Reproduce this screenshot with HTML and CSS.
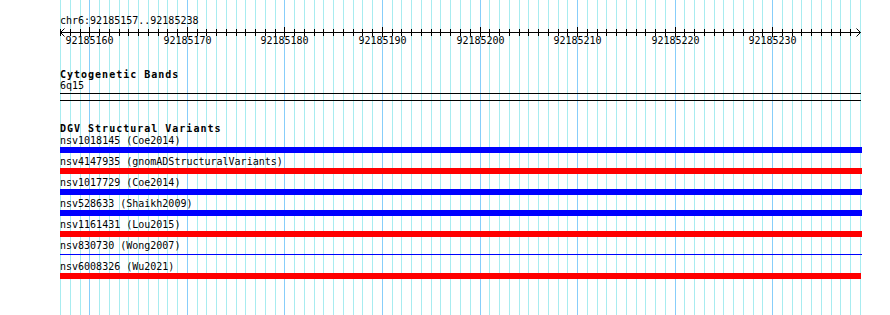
FILE: index.html
```html
<!DOCTYPE html>
<html>
<head>
<meta charset="utf-8">
<link rel="stylesheet" href="styles.css">
</head>
<body>
<div class="panel">
  <svg class="grid" width="890" height="315" viewBox="0 0 890 315">
    <path class="minor" d="M60.5 0V315M70.5 0V315M80.5 0V315M99.5 0V315M109.5 0V315M119.5 0V315M128.5 0V315M138.5 0V315M148.5 0V315M158.5 0V315M167.5 0V315M177.5 0V315M197.5 0V315M206.5 0V315M216.5 0V315M226.5 0V315M236.5 0V315M245.5 0V315M255.5 0V315M265.5 0V315M275.5 0V315M294.5 0V315M304.5 0V315M314.5 0V315M323.5 0V315M333.5 0V315M343.5 0V315M353.5 0V315M362.5 0V315M372.5 0V315M392.5 0V315M401.5 0V315M411.5 0V315M421.5 0V315M431.5 0V315M440.5 0V315M450.5 0V315M460.5 0V315M470.5 0V315M489.5 0V315M499.5 0V315M509.5 0V315M519.5 0V315M528.5 0V315M538.5 0V315M548.5 0V315M558.5 0V315M567.5 0V315M587.5 0V315M597.5 0V315M606.5 0V315M616.5 0V315M626.5 0V315M636.5 0V315M645.5 0V315M655.5 0V315M665.5 0V315M684.5 0V315M694.5 0V315M704.5 0V315M714.5 0V315M723.5 0V315M733.5 0V315M743.5 0V315M753.5 0V315M762.5 0V315M782.5 0V315M792.5 0V315M801.5 0V315M811.5 0V315M821.5 0V315M831.5 0V315M840.5 0V315M850.5 0V315M860.5 0V315"/>
    <path class="major" d="M89.5 0V315M187.5 0V315M284.5 0V315M382.5 0V315M480.5 0V315M577.5 0V315M675.5 0V315M772.5 0V315"/>
  </svg>
  <div class="content">
    <div class="text">chr6:92185157..92185238</div>
    <svg class="ruler" width="802" height="21" viewBox="0 0 802 21">
      <path class="rule" d="M0 6.5H800.5M4.5 2.5L0.5 6.5L4.5 10.5M796.5 2.5L800.5 6.5L796.5 10.5"/>
      <path class="rule" d="M0.5 3v7M10.5 3v7M20.5 3v7M39.5 3v7M49.5 3v7M59.5 3v7M68.5 3v7M78.5 3v7M88.5 3v7M98.5 3v7M107.5 3v7M117.5 3v7M137.5 3v7M146.5 3v7M156.5 3v7M166.5 3v7M176.5 3v7M185.5 3v7M195.5 3v7M205.5 3v7M215.5 3v7M234.5 3v7M244.5 3v7M254.5 3v7M263.5 3v7M273.5 3v7M283.5 3v7M293.5 3v7M302.5 3v7M312.5 3v7M332.5 3v7M341.5 3v7M351.5 3v7M361.5 3v7M371.5 3v7M380.5 3v7M390.5 3v7M400.5 3v7M410.5 3v7M429.5 3v7M439.5 3v7M449.5 3v7M459.5 3v7M468.5 3v7M478.5 3v7M488.5 3v7M498.5 3v7M507.5 3v7M527.5 3v7M537.5 3v7M546.5 3v7M556.5 3v7M566.5 3v7M576.5 3v7M585.5 3v7M595.5 3v7M605.5 3v7M624.5 3v7M634.5 3v7M644.5 3v7M654.5 3v7M663.5 3v7M673.5 3v7M683.5 3v7M693.5 3v7M702.5 3v7M722.5 3v7M732.5 3v7M741.5 3v7M751.5 3v7M761.5 3v7M771.5 3v7M780.5 3v7M790.5 3v7"/>
      <path class="rule" d="M29.5 1v10M127.5 1v10M224.5 1v10M322.5 1v10M420.5 1v10M517.5 1v10M615.5 1v10M712.5 1v10"/>
      <g class="labels">
        <text x="29.5" y="18">92185160</text>
        <text x="127.5" y="18">92185170</text>
        <text x="224.5" y="18">92185180</text>
        <text x="322.5" y="18">92185190</text>
        <text x="420.5" y="18">92185200</text>
        <text x="517.5" y="18">92185210</text>
        <text x="615.5" y="18">92185220</text>
        <text x="712.5" y="18">92185230</text>
      </g>
    </svg>

    <section class="track cyto">
      <div class="title">Cytogenetic Bands</div>
      <div class="text">6q15</div>
      <div class="band"></div>
    </section>

    <section class="track dgv">
      <div class="title">DGV Structural Variants</div>
      <div class="feature">
        <div class="text">nsv1018145 (Coe2014)</div>
        <div class="bar blue"></div>
      </div>
      <div class="feature">
        <div class="text">nsv4147935 (gnomADStructuralVariants)</div>
        <div class="bar red"></div>
      </div>
      <div class="feature">
        <div class="text">nsv1017729 (Coe2014)</div>
        <div class="bar blue"></div>
      </div>
      <div class="feature">
        <div class="text">nsv528633 (Shaikh2009)</div>
        <div class="bar blue"></div>
      </div>
      <div class="feature">
        <div class="text">nsv1161431 (Lou2015)</div>
        <div class="bar red"></div>
      </div>
      <div class="feature">
        <div class="text">nsv830730 (Wong2007)</div>
        <div class="bar thin"><div class="thin-line"></div></div>
      </div>
      <div class="feature">
        <div class="text">nsv6008326 (Wu2021)</div>
        <div class="bar red short"></div>
      </div>
    </section>
  </div>
</div>
</body>
</html>
```

FILE: styles.css
```css
html, body {
  margin: 0;
  padding: 0;
  background: #ffffff;
}

.panel {
  position: relative;
  width: 890px;
  height: 315px;
  overflow: hidden;
  background: #ffffff;
  font-family: "DejaVu Sans Mono", "Liberation Mono", monospace;
  font-size: 10px;
  color: #000000;
}

.grid {
  position: absolute;
  left: 0;
  top: 0;
  display: block;
}

.grid .minor {
  stroke: #a8ecf0;
  stroke-width: 1;
  fill: none;
}

.grid .major {
  stroke: #87cefa;
  stroke-width: 1;
  fill: none;
}

.content {
  position: relative;
  display: flex;
  flex-direction: column;
  padding: 15px 0 0 60px;
}

.text {
  height: 11px;
  line-height: 11px;
  white-space: nowrap;
}

.title {
  height: 11px;
  line-height: 11px;
  font-weight: bold;
  letter-spacing: 1px;
  white-space: nowrap;
}

.ruler {
  display: block;
  overflow: visible;
}

.ruler .rule {
  stroke: #000000;
  stroke-width: 1;
  fill: none;
}

.ruler .labels text {
  font-family: "DejaVu Sans Mono", "Liberation Mono", monospace;
  font-size: 10px;
  text-anchor: middle;
  fill: #000000;
}

.track {
  display: flex;
  flex-direction: column;
}

.cyto {
  margin-top: 22px;
}

.band {
  width: 801px;
  height: 6px;
  margin-top: 2px;
  border-top: 1px solid #000000;
  border-bottom: 1px solid #000000;
}

.dgv {
  margin-top: 22px;
}

.feature {
  display: flex;
  flex-direction: column;
  margin-top: 1px;
}

.feature + .feature {
  margin-top: 3px;
}

.bar {
  width: 802px;
  height: 6px;
  margin-top: 1px;
}

.bar.blue {
  background: #0000ff;
}

.bar.red {
  background: #ff0000;
}

.bar.short {
  width: 801px;
}

.bar.thin {
  display: flex;
  flex-direction: column;
}

.thin-line {
  height: 1px;
  margin-top: 2px;
  background: #0000ff;
}
```
